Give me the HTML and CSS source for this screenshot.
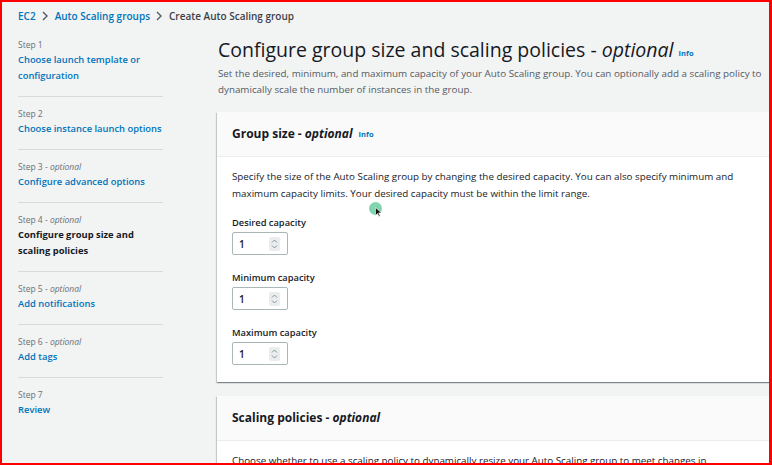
FILE: index.html
```html
<!DOCTYPE html>
<html lang="en">
<head>
<meta charset="utf-8">
<title>Create Auto Scaling group</title>
<link rel="stylesheet" href="styles.css">
</head>
<body>
<div class="frame">
  <nav class="breadcrumb">
    <a class="crumb-link">EC2</a>
    <svg class="crumb-sep" width="6" height="10" viewBox="0 0 6 10"><path d="M1 1l4 4-4 4" fill="none" stroke="#545b64" stroke-width="1.4"/></svg>
    <a class="crumb-link">Auto Scaling groups</a>
    <svg class="crumb-sep" width="6" height="10" viewBox="0 0 6 10"><path d="M1 1l4 4-4 4" fill="none" stroke="#545b64" stroke-width="1.4"/></svg>
    <span class="crumb-current">Create Auto Scaling group</span>
  </nav>
  <div class="layout">
    <aside class="steps">
      <div class="step"><div class="step-label">Step 1</div><a class="step-link">Choose launch template or configuration</a></div>
      <div class="step"><div class="step-label">Step 2</div><a class="step-link">Choose instance launch options</a></div>
      <div class="step"><div class="step-label">Step 3 - <em>optional</em></div><a class="step-link">Configure advanced options</a></div>
      <div class="step"><div class="step-label">Step 4 - <em>optional</em></div><span class="step-current">Configure group size and scaling policies</span></div>
      <div class="step"><div class="step-label">Step 5 - <em>optional</em></div><a class="step-link">Add notifications</a></div>
      <div class="step"><div class="step-label">Step 6 - <em>optional</em></div><a class="step-link">Add tags</a></div>
      <div class="step step-last"><div class="step-label">Step 7</div><a class="step-link">Review</a></div>
    </aside>
    <main class="content">
      <h1 class="page-title">Configure group size and scaling policies - <em>optional</em> <a class="info">Info</a></h1>
      <p class="page-desc">Set the desired, minimum, and maximum capacity of your Auto Scaling group. You can optionally add a scaling policy to dynamically scale the number of instances in the group.</p>
      <section class="card">
        <header class="card-header"><h2 class="card-title">Group size - <em>optional</em> <a class="info">Info</a></h2></header>
        <div class="card-body card-body-fields">
          <p class="card-text">Specify the size of the Auto Scaling group by changing the desired capacity. You can also specify minimum and maximum capacity limits. Your desired capacity must be within the limit range.</p>
          <div class="field">
            <label class="field-label">Desired capacity</label>
            <div class="num-input"><span class="num-value">1</span><svg class="spinner" width="11" height="14" viewBox="0 0 11 14"><rect x="0" y="0" width="11" height="14" rx="2" fill="#eaeded"/><path d="M3 5.5l2.5-2.5 2.5 2.5M3 8.5l2.5 2.5 2.5-2.5" fill="none" stroke="#879596" stroke-width="1"/></svg></div>
          </div>
          <div class="field">
            <label class="field-label">Minimum capacity</label>
            <div class="num-input"><span class="num-value">1</span><svg class="spinner" width="11" height="14" viewBox="0 0 11 14"><rect x="0" y="0" width="11" height="14" rx="2" fill="#eaeded"/><path d="M3 5.5l2.5-2.5 2.5 2.5M3 8.5l2.5 2.5 2.5-2.5" fill="none" stroke="#879596" stroke-width="1"/></svg></div>
          </div>
          <div class="field">
            <label class="field-label">Maximum capacity</label>
            <div class="num-input"><span class="num-value">1</span><svg class="spinner" width="11" height="14" viewBox="0 0 11 14"><rect x="0" y="0" width="11" height="14" rx="2" fill="#eaeded"/><path d="M3 5.5l2.5-2.5 2.5 2.5M3 8.5l2.5 2.5 2.5-2.5" fill="none" stroke="#879596" stroke-width="1"/></svg></div>
          </div>
        </div>
      </section>
      <section class="card">
        <header class="card-header"><h2 class="card-title">Scaling policies - <em>optional</em></h2></header>
        <div class="card-body">
          <p class="card-text card-text-narrow">Choose whether to use a scaling policy to dynamically resize your Auto Scaling group to meet changes in demand.</p>
        </div>
      </section>
    </main>
  </div>
  <div class="cursor">
    <span class="cursor-ring"></span>
    <svg class="cursor-arrow" width="7" height="10" viewBox="0 0 7 10"><path d="M0.5 0.5v8l2-2 1.5 3 1.2-0.6-1.5-3h2.8z" fill="#111" stroke="#fff" stroke-width="0.6"/></svg>
  </div>
</div>
</body>
</html>
```

FILE: styles.css
```css
html, body {
  margin: 0;
  padding: 0;
}

body {
  font-family: "Open Sans", "Noto Sans", sans-serif;
  color: #16191f;
  background: #ffffff;
}

.frame {
  position: relative;
  box-sizing: border-box;
  width: 772px;
  height: 465px;
  border-style: solid;
  border-color: #ff0000;
  border-width: 2px 3px 2px 2px;
  background: #f2f3f3;
  overflow: hidden;
  padding-left: 16px;
}

/* Breadcrumb */
.breadcrumb {
  display: flex;
  align-items: center;
  height: 16px;
  margin-top: 6px;
  font-size: 10px;
  font-weight: 600;
  line-height: 16px;
  white-space: nowrap;
}

.crumb-link {
  color: #0073bb;
}

.crumb-sep {
  margin: 0 7px 0 6px;
}

.crumb-current {
  color: #3b4148;
}

/* Layout */
.layout {
  display: flex;
  margin-top: 4px;
}

.steps {
  flex: 0 0 145px;
  width: 145px;
}

.step {
  padding: 9px 0 12px;
  border-bottom: 1px solid #d5dbdb;
}

.step-last {
  border-bottom: none;
}

.step-label {
  font-size: 8.5px;
  line-height: 15px;
  color: #687078;
}

.step-label em {
  font-style: italic;
}

.step-link,
.step-current {
  display: block;
  font-size: 9.4px;
  line-height: 16px;
  font-weight: 600;
  color: #0073bb;
}

.step-current {
  color: #16191f;
  font-weight: 700;
}

.content {
  flex: 0 0 600px;
  width: 600px;
  margin-left: 55px;
  padding-top: 10px;
}

.page-title {
  margin: 0;
  font-size: 19.5px;
  font-weight: 400;
  line-height: 24px;
  white-space: nowrap;
}

.page-title em {
  font-style: italic;
}

.info {
  font-size: 7.5px;
  font-weight: 700;
  line-height: 1;
  color: #0073bb;
  vertical-align: 1px;
}

.page-desc {
  margin: 4px 0 0;
  max-width: 560px;
  font-size: 9.8px;
  line-height: 16px;
  color: #545b64;
}

/* Cards */
.card {
  margin-top: 14px;
  margin-left: -1px;
  background: #ffffff;
  box-shadow: 0 1px 1px 0 rgba(0, 28, 36, 0.3), 1px 1px 1px 0 rgba(0, 28, 36, 0.15), -1px 1px 1px 0 rgba(0, 28, 36, 0.15);
}

.card-header {
  display: flex;
  align-items: center;
  height: 44px;
  padding: 0 15px;
  background: #fafafa;
  border-bottom: 1px solid #eaeded;
}

.card-title {
  margin: 0;
  font-size: 12px;
  font-weight: 700;
  line-height: 18px;
}

.card-title em {
  font-style: italic;
}

.card-title .info {
  margin-left: 3px;
}

.card-body {
  padding: 11px 15px 14px;
}

.card-body-fields {
  padding-bottom: 17px;
}

.card-text {
  margin: 0;
  max-width: 520px;
  font-size: 9.8px;
  line-height: 17px;
}

.card-text-narrow {
  max-width: 485px;
}

.field {
  margin-top: 15px;
}

.field:first-of-type {
  margin-top: 13px;
}

.field-label {
  display: block;
  font-size: 9.3px;
  line-height: 15px;
  font-weight: 600;
}

.num-input {
  box-sizing: border-box;
  display: flex;
  align-items: center;
  justify-content: space-between;
  width: 56px;
  height: 23px;
  margin-top: 2px;
  padding: 0 7px 0 6px;
  border: 1px solid #aab7b8;
  border-radius: 2px;
  background: #ffffff;
}

.num-value {
  font-size: 10px;
  font-weight: 600;
}

/* Mouse pointer overlay */
.cursor {
  position: absolute;
  left: 366px;
  top: 199px;
  width: 16px;
  height: 20px;
}

.cursor-ring {
  position: absolute;
  left: 1px;
  top: 1px;
  width: 13px;
  height: 13px;
  border-radius: 50%;
  background: rgba(60, 190, 130, 0.65);
}

.cursor-arrow {
  position: absolute;
  left: 7px;
  top: 6px;
}
```
